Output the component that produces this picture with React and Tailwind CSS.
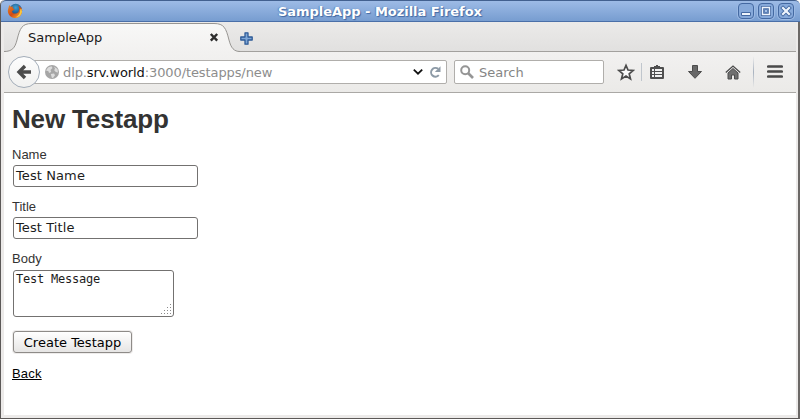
import React from "react";

function FirefoxLogo() {
  return (
    <svg width="16" height="16" viewBox="0 0 16 16" className="shrink-0 -ml-px">
      <defs>
        <linearGradient id="fox" x1="0" y1="0" x2="1" y2="1">
          <stop offset="0" stopColor="#e88a28" />
          <stop offset=".5" stopColor="#d24a14" />
          <stop offset="1" stopColor="#f5b83a" />
        </linearGradient>
        <radialGradient id="globe" cx=".5" cy=".3" r=".7">
          <stop offset="0" stopColor="#3fa0d4" />
          <stop offset="1" stopColor="#0f3468" />
        </radialGradient>
      </defs>
      <circle cx="8.7" cy="7.2" r="6.4" fill="url(#globe)" />
      <path
        d="M2.2 2 3.6 3.8 6 3.5 5.6 5 7.6 6.4 5.8 7.6 4.8 8.8 6.5 10.6 9.2 10.4 11.5 9.2 12.3 6 11.4 2.5 13.6 4.3 14.8 6 15 9.2C14 13.5 11 15.2 7.6 15 3.5 14.6.8 11.5.8 7.5Z"
        fill="url(#fox)"
      />
      <path d="M14.4 5.4 15 9C14.2 12.5 11.5 14.4 8.5 14.4 11.5 12.8 13.3 10.5 13.3 6.5Z" fill="#fbc93d" />
    </svg>
  );
}

function WindowButton({ children }) {
  return (
    <div className="w-4 h-4 rounded-[4px] border border-[#4469a2] bg-[#86a9da] shadow-[0_0_0_1px_#9bb9e3] flex items-center justify-center">
      <svg width="14" height="14" viewBox="0 0 14 14" className="shrink-0">
        {children}
      </svg>
    </div>
  );
}

function TitleBar() {
  return (
    <div className="h-[22px] shrink-0 flex items-center justify-between pl-[7px] pr-[6px] border-t border-t-[#42608f] border-b border-b-[#4a6fa8] bg-linear-to-b from-[#9dbbe6] to-[#779dd0] rounded-t-[5px]">
      <div className="w-5">
        <FirefoxLogo />
      </div>
      <div className="text-[13px] leading-5 font-bold text-white whitespace-nowrap tracking-[-0.04px] [text-shadow:1px_1px_1px_#4268a2,-1px_0_1px_#5f86bd] pt-px">
        SampleApp - Mozilla Firefox
      </div>
      <div className="w-[62px] flex justify-end gap-1">
        <WindowButton>
          <path d="M2.5 8.5h9v3h-9z" fill="#eef4fc" stroke="#4469a2" strokeWidth="1" />
        </WindowButton>
        <WindowButton>
          <path d="M3.5 3.5h7v7h-7z" fill="none" stroke="#4469a2" strokeWidth="3" />
          <path d="M3.5 3.5h7v7h-7z" fill="none" stroke="#eef4fc" strokeWidth="1.4" />
          <path d="M5.5 5.5h3v3h-3z" fill="#a5c0e6" stroke="#4469a2" strokeWidth=".7" />
        </WindowButton>
        <WindowButton>
          <path d="m4 4 6 6m0-6-6 6" stroke="#4469a2" strokeWidth="4" strokeLinecap="square" />
          <path d="m4 4 6 6m0-6-6 6" stroke="#eef4fc" strokeWidth="2.2" strokeLinecap="square" />
        </WindowButton>
      </div>
    </div>
  );
}

function TabStrip() {
  return (
    <div className="h-[30px] shrink-0 flex bg-linear-to-b from-[#ebeae9] to-[#e1e0df] shadow-[inset_0_-1px_0_#a3a19e]">
      <div className="relative w-[236px] h-[30px] shrink-0">
        <svg className="absolute inset-0" width="236" height="30" viewBox="0 0 236 30">
          <defs>
            <linearGradient id="tab" x1="0" y1="0" x2="0" y2="1">
              <stop offset="0" stopColor="#f8f8f7" />
              <stop offset="1" stopColor="#f2f1f0" />
            </linearGradient>
          </defs>
          <path
            d="M0 29.5C8 29.5 11 26 13 18C16 6 18 1.5 28 1.5H210C220 1.5 222 6 225 18C227 26 230 29.5 236 29.5V30.5H0Z"
            fill="url(#tab)"
          />
          <path
            d="M0 29.5C8 29.5 11 26 13 18C16 6 18 1.5 28 1.5H210C220 1.5 222 6 225 18C227 26 230 29.5 236 29.5"
            fill="none"
            stroke="#979592"
          />
        </svg>
        <div className="relative h-[30px] pl-6 pr-[21px] flex items-center justify-between text-[13px] text-[#1a1a1a]">
          <span className="pt-px">SampleApp</span>
          <svg width="10" height="10" viewBox="0 0 10 10">
            <path d="m1.8 2 6.4 6.6m0-6.6-6.4 6.6" stroke="#2e2e2e" strokeWidth="2.4" />
          </svg>
        </div>
      </div>
      <svg className="mt-[10px]" width="13" height="13" viewBox="0 0 13 13">
        <path
          d="M5 .8h3V5h4.2v3H8v4.2H5V8H.8V5H5Z"
          fill="#7ea6d6"
          stroke="#2d5a96"
          strokeWidth="1.3"
          strokeLinejoin="round"
        />
      </svg>
    </div>
  );
}

function AddressBar() {
  return (
    <div className="flex items-center w-[443px] h-10 pl-1 shrink-0">
      <div className="z-10 w-8 h-8 shrink-0 rounded-full border border-[#a3adb9] bg-linear-to-b from-[#fdfdfd] to-[#f1f1f0] flex items-center justify-center">
        <svg width="16" height="16" viewBox="0 0 16 16">
          <path d="M9 2 3 8l6 6M4 8h11" fill="none" stroke="#4b4b4b" strokeWidth="3.4" />
        </svg>
      </div>
      <div className="flex-1 -ml-3 pl-4 pr-[5px] h-6 flex items-center bg-white border border-[#b0aeab] rounded-[2px]">
        <svg width="14" height="14" viewBox="0 0 14 14" className="shrink-0">
          <circle cx="7" cy="7" r="7" fill="#a6a6a6" />
          <path
            d="M1 5.5 3 2.5 6.5 1.2 7.5 3 5.5 5 6.2 7 4 8 3.5 6.3ZM8.8 1.5 12.5 4 13 7.5 10.8 7 9.2 5.2 10 3.5ZM5.8 9 9 8.5 10 10.3 8 13 6.8 12.8Z"
            fill="#dcdcdc"
          />
        </svg>
        <span className="ml-[4px] text-[13px] text-[#8d8d8d] whitespace-nowrap tracking-[-0.1px] pt-px">
          dlp.<span className="text-[#111]">srv.world</span>:3000/testapps/new
        </span>
        <div className="flex-1" />
        <svg width="10" height="8" viewBox="0 0 10 8">
          <path d="m.8 1.7 4.2 4 4.2-4" fill="none" stroke="#111" strokeWidth="1.8" />
        </svg>
        <svg className="ml-[6px]" width="12" height="12" viewBox="0 0 12 12">
          <path d="M9.2 2.8A4.4 4.4 0 1 0 9.8 9.2" fill="none" stroke="#8d9aa6" strokeWidth="2" />
          <path d="M11.5.2V6H5.8Z" fill="#8d9aa6" />
        </svg>
      </div>
    </div>
  );
}

function Toolbar() {
  return (
    <div className="h-[41px] shrink-0 flex items-center bg-linear-to-b from-[#f2f1f0] to-[#ebeae8] border-b border-[#aaa8a5]">
      <AddressBar />
      <div className="ml-[7px] w-[150px] h-6 shrink-0 flex items-center pl-[5px] bg-white border border-[#b0aeab] rounded-[2px]">
        <svg width="14" height="14" viewBox="0 0 14 14">
          <circle cx="5.2" cy="5.2" r="4" fill="none" stroke="#959595" strokeWidth="2" />
          <path d="m8 8 5 5" stroke="#959595" strokeWidth="2.6" />
        </svg>
        <span className="ml-[5px] pt-px text-[13px] text-[#858585]">Search</span>
      </div>
      <svg className="ml-[13px] shrink-0" width="18" height="18" viewBox="0 0 18 18">
        <path
          d="m9 2.4 2 4.6 5.2.4-4 3.4 1.3 5.1L9 13.1l-4.5 2.8 1.3-5.1-4-3.4L7 7Z"
          fill="#fafafa"
          stroke="#4c4c4c"
          strokeWidth="1.7"
        />
      </svg>
      <div className="ml-[6px] w-px h-[18px] bg-[#c0c6cd]" />
      <svg className="ml-2 shrink-0" width="14" height="16" viewBox="0 0 14 16">
        <path d="M0 4q0-1 1-1h3V2h2V1h2v1h2v1h3q1 0 1 1v10q0 1-1 1H1q-1 0-1-1Z" fill="#4f4f4f" />
        <path d="M2 5h2v2H2zM5 5h7v2H5zM2 8h2v2H2zM5 8h7v2H5zM2 11h2v2H2zM5 11h7v2H5z" fill="#f1f1f1" />
      </svg>
      <svg className="ml-6 shrink-0" width="14" height="14" viewBox="0 0 14 14">
        <path d="M4.5.5h5v6h4L7 13.3.5 6.5h4Z" fill="#686868" stroke="#4c4c4c" />
      </svg>
      <svg className="ml-[23px] shrink-0" width="16" height="15" viewBox="0 0 16 15">
        <path d="m3 8 5-4.5L13 8v6H9.5v-4h-3v4H3Z" fill="#707070" stroke="#4c4c4c" />
        <path d="m.8 7.5 7.2-6.4 7.2 6.4" fill="none" stroke="#4c4c4c" strokeWidth="1.4" />
      </svg>
      <div className="ml-3 w-px h-8 bg-linear-to-b from-transparent via-[#a8b2bf] to-transparent" />
      <svg className="ml-[13px] -mt-px shrink-0" width="16" height="13" viewBox="0 0 16 13">
        <path d="M1.3 1.5h13.4M1.3 6.5h13.4M1.3 11.5h13.4" stroke="#4a4a4a" strokeWidth="2.7" strokeLinecap="round" />
      </svg>
    </div>
  );
}

function Field({ label, value }) {
  return (
    <div className="h-[52px]">
      <div className="h-[18px] leading-[18px] text-[13px] text-[#333] font-['Liberation_Sans',sans-serif]">{label}</div>
      <div className="ml-[1px] w-[185px] h-[22px] mt-px pl-[2px] border border-[#737170] rounded-[3px] bg-white text-[13px] leading-[19px] tracking-[0.1px] text-[#1c1c1c]">
        {value}
      </div>
    </div>
  );
}

const gripDots = [
  [10, 0], [7, 3], [10, 3], [4, 6], [7, 6], [10, 6], [1, 9], [4, 9], [7, 9], [10, 9],
];

function Page() {
  return (
    <div className="flex-1 bg-white pl-2 flex flex-col items-start">
      <h1 className="mt-[9px] h-[34px] leading-[34px] text-[26px] font-bold tracking-[-0.16px] text-[#333] font-['Liberation_Sans',sans-serif]">
        New Testapp
      </h1>
      <div className="mt-[10px]">
        <Field label="Name" value="Test Name" />
        <Field label="Title" value="Test Title" />
        <div className="h-[18px] leading-[18px] text-[13px] text-[#333] font-['Liberation_Sans',sans-serif]">Body</div>
        <div className="relative ml-[1px] mt-[2px] w-[161px] h-[47px] pl-[2px] border border-[#737170] rounded-[3px] font-['DejaVu_Sans_Mono',monospace] text-[12px] leading-[17px] tracking-[-0.22px] text-[#1c1c1c]">
          Test Message
          <svg className="absolute right-[1px] bottom-[2px]" width="12" height="10" viewBox="0 0 12 10">
            {gripDots.map(([x, y]) => (
              <rect key={x + "-" + y} x={x} y={y} width="1" height="1" fill="#8a8a8a" />
            ))}
          </svg>
        </div>
      </div>
      <button className="ml-[1px] mt-[14px] w-[119px] h-[22px] rounded-[3px] border border-[#8e8b88] bg-linear-to-b from-white to-[#e6e5e4] shadow-[0_0_0_1px_#eeeceb] text-[13px] leading-5 pt-px text-black whitespace-nowrap">
        Create Testapp
      </button>
      <a className="mt-3 text-[13px] leading-[18px] tracking-[0.2px] text-black underline font-['Liberation_Sans',sans-serif]">Back</a>
    </div>
  );
}

export default function App() {
  return (
    <div className="w-[800px] h-[419px] overflow-hidden flex flex-col rounded-t-[5px] bg-[#eceae9] border-l border-l-[#5c5958] font-['DejaVu_Sans',sans-serif]">
      <TitleBar />
      <div className="flex-1 flex flex-col pl-[3px] pr-[2px] pb-[3px] border-r-2 border-r-[#6b6866] border-b border-b-[#5c5958]">
        <TabStrip />
        <Toolbar />
        <Page />
      </div>
    </div>
  );
}
